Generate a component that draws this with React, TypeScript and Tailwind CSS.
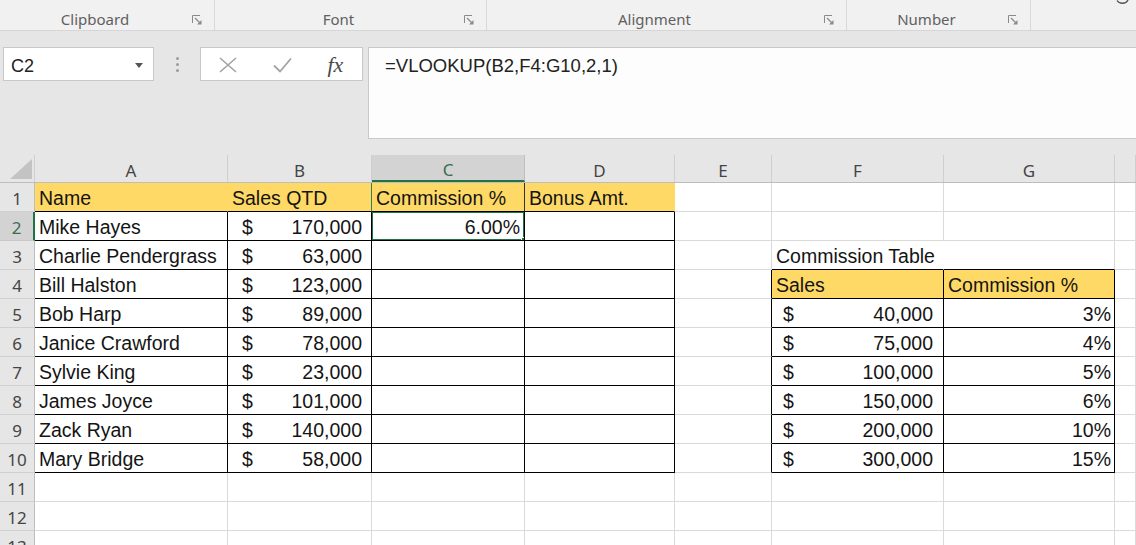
import React from 'react';

const YELLOW = 'bg-[#ffd966]';

type Cell = { text?: string; money?: string; right?: string; fill?: boolean; overflow?: boolean };

const Launcher = () => (
  <svg width="10" height="10" viewBox="0 0 10 10" className="text-[#8a8a8a]">
    <path d="M0.5 8V0.5H8" fill="none" stroke="currentColor" strokeWidth="1" />
    <path d="M3 3L8 8" fill="none" stroke="currentColor" strokeWidth="1.2" />
    <path d="M5 9.5H9.5V5Z" fill="currentColor" />
  </svg>
);

const RibbonGroup = ({ label, width }: { label: string; width: string }) => (
  <div className={`flex h-full items-start border-r border-r-[#d8d8d8] ${width}`}>
    <div className="flex-1 pt-[8px] text-center text-[15px] leading-[22px] text-[#606060]">{label}</div>
    <div className="w-[24px] pt-[15px] pl-[2px]">
      <Launcher />
    </div>
  </div>
);

const leftNames = ['Mike Hayes', 'Charlie Pendergrass', 'Bill Halston', 'Bob Harp', 'Janice Crawford', 'Sylvie King', 'James Joyce', 'Zack Ryan', 'Mary Bridge'];
const leftSales = ['170,000', '63,000', '123,000', '89,000', '78,000', '23,000', '101,000', '140,000', '58,000'];
const tiers = [
  ['40,000', '3%'],
  ['75,000', '4%'],
  ['100,000', '5%'],
  ['150,000', '6%'],
  ['200,000', '10%'],
  ['300,000', '15%'],
];

function cellAt(r: number, c: number): Cell {
  if (r === 1) {
    if (c === 1) return { text: 'Name', fill: true };
    if (c === 2) return { text: 'Sales QTD', fill: true };
    if (c === 3) return { text: 'Commission %', fill: true };
    if (c === 4) return { text: 'Bonus Amt.', fill: true };
  }
  if (r >= 2 && r <= 10) {
    if (c === 1) return { text: leftNames[r - 2] };
    if (c === 2) return { money: leftSales[r - 2] };
    if (c === 3 && r === 2) return { right: '6.00%' };
  }
  if (r === 3 && c === 6) return { text: 'Commission Table', overflow: true };
  if (r === 4 && c === 6) return { text: 'Sales', fill: true };
  if (r === 4 && c === 7) return { text: 'Commission %', fill: true };
  if (r >= 5 && r <= 10) {
    if (c === 6) return { money: tiers[r - 5][0] };
    if (c === 7) return { right: tiers[r - 5][1] };
  }
  return {};
}

function rightBorder(r: number, c: number) {
  if (r === 1 && c >= 1 && c <= 4) {
    if (c === 2) return 'border-r-[#3d7a57]';
    if (c === 3) return 'border-r-[#333]';
    return 'border-r-[#ffd966]';
  }
  if (r >= 2 && r <= 10 && c >= 1 && c <= 4) return 'border-r-black';
  if (r >= 4 && r <= 10 && c >= 5 && c <= 7) return 'border-r-black';
  if (r === 3 && c === 6) return 'border-r-white';
  return 'border-r-[#dadada]';
}

function bottomBorder(r: number, c: number) {
  if (r >= 1 && r <= 10 && c >= 1 && c <= 4) return 'border-b-black';
  if (r >= 3 && r <= 10 && c >= 6 && c <= 7) return 'border-b-black';
  return 'border-b-[#dadada]';
}

const SheetCell = ({ r, c }: { r: number; c: number }) => {
  const cell = cellAt(r, c);
  const selected = r === 2 && c === 3;
  const money = c === 2 ? 'pl-[14px] pr-[9px]' : 'pl-[11px] pr-[10px]';
  return (
    <div
      className={`relative flex items-center border-r border-b pt-[4px] text-[19.5px] leading-none text-[#141414] ${rightBorder(r, c)} ${bottomBorder(r, c)} ${cell.fill ? YELLOW : 'bg-white'} ${cell.overflow ? 'z-10 overflow-visible whitespace-nowrap' : 'overflow-hidden'}`}
    >
      {cell.text && <span className="whitespace-nowrap pl-[4px]">{cell.text}</span>}
      {cell.money && (
        <div className={`flex w-full justify-between ${money}`}>
          <span>$</span>
          <span>{cell.money}</span>
        </div>
      )}
      {cell.right && <span className={`w-full text-right ${c === 3 ? 'pr-[4px]' : 'pr-[3px]'}`}>{cell.right}</span>}
      {selected && (
        <>
          <div className="pointer-events-none absolute -top-[1px] -left-[1px] -right-[1px] -bottom-[1px] border-2 border-[#217346]" />
          <div className="absolute -right-[3px] -bottom-[3px] h-[6px] w-[6px] border border-white bg-[#217346]" />
        </>
      )}
    </div>
  );
};

const cols = ['A', 'B', 'C', 'D', 'E', 'F', 'G', ''];
const rows = Array.from({ length: 13 }, (_, i) => i + 1);

export default function App() {
  return (
    <div className="h-[545px] w-[1136px] overflow-hidden bg-white" style={{ fontFamily: '"Liberation Sans", Arial, sans-serif' }}>
      {/* ribbon group labels */}
      <div className="relative flex h-[31px] border-b border-b-[#d6d6d6] bg-[#f1f1f1]" style={{ fontFamily: '"Noto Sans", "Open Sans", sans-serif' }}>
        <RibbonGroup label="Clipboard" width="w-[215px]" />
        <RibbonGroup label="Font" width="w-[272px]" />
        <RibbonGroup label="Alignment" width="w-[360px]" />
        <RibbonGroup label="Number" width="w-[184px]" />
        <div className="flex-1" />
        <svg width="14" height="6" viewBox="0 0 14 6" className="absolute right-[6px] top-0">
          <path d="M1 0.5C3 4 10 4.5 12 0" fill="none" stroke="#555" strokeWidth="1.4" />
        </svg>
      </div>

      {/* name box + formula bar */}
      <div className="flex h-[124px] items-start bg-[#e6e6e6] pt-[16px]">
        <div className="ml-[3px] flex h-[34px] w-[151px] items-center justify-between border border-[#c8c8c8] bg-white pl-[7px] pr-[10px] pt-[4px]">
          <span className="text-[18px] leading-none text-[#222]">C2</span>
          <svg width="8" height="5" viewBox="0 0 8 5" className="-mt-[2px]">
            <path d="M0 0H8L4 5Z" fill="#555" />
          </svg>
        </div>
        <div className="flex h-[34px] w-[46px] flex-col items-center justify-center gap-[3px] pt-[1px]">
          <span className="h-[3px] w-[3px] rounded-full bg-[#9c9c9c]" />
          <span className="h-[3px] w-[3px] rounded-full bg-[#9c9c9c]" />
          <span className="h-[3px] w-[3px] rounded-full bg-[#9c9c9c]" />
        </div>
        <div className="flex h-[34px] w-[163px] items-center border border-[#c8c8c8] bg-white pt-[1px]">
          <div className="flex w-[55px] justify-center">
            <svg width="18" height="16" viewBox="0 0 18 16">
              <path d="M1 1L17 15M17 1L1 15" stroke="#a3a3a3" strokeWidth="1.6" fill="none" />
            </svg>
          </div>
          <div className="flex w-[54px] justify-center">
            <svg width="19" height="16" viewBox="0 0 19 16">
              <path d="M1 8.5L7 14.5L18 1.5" stroke="#a3a3a3" strokeWidth="1.8" fill="none" />
            </svg>
          </div>
          <div className="flex w-[54px] justify-center">
            <span className="text-[22px] italic leading-none text-[#4a4a4a]" style={{ fontFamily: '"Liberation Serif", serif' }}>
              fx
            </span>
          </div>
        </div>
        <div className="ml-[5px] h-[92px] flex-1 border-t border-l border-b border-[#c8c8c8] bg-[#fdfdfd] pl-[16px] pt-[7px]">
          <span className="text-[18.5px] leading-[22px] text-[#222]">=VLOOKUP(B2,F4:G10,2,1)</span>
        </div>
      </div>

      {/* column headers */}
      <div className="grid h-[28px] grid-cols-[35px_193px_144px_153px_150px_97px_172px_171px_1fr] border-b border-b-[#bdbdbd] bg-[#e6e6e6]">
        <div className="flex items-end justify-end border-r border-r-[#cfcfcf] pb-[3px] pr-[2px]">
          <svg width="22" height="20" viewBox="0 0 22 20">
            <path d="M22 0V20H0Z" fill="#c3c3c3" />
          </svg>
        </div>
        {cols.map((l, i) => (
          <div
            key={i}
            className={`flex items-center justify-center pt-[3px] text-[17px] leading-none ${
              l === 'C'
                ? 'border-r border-b-2 border-r-[#bdbdbd] border-b-[#217346] bg-[#d3d3d3] text-[#3b6e51]'
                : 'border-r border-r-[#cfcfcf] text-[#444]'
            }`}
            style={{ fontFamily: '"Noto Sans", "Open Sans", sans-serif' }}
          >
            {l}
          </div>
        ))}
      </div>

      {/* sheet body */}
      <div className="grid auto-rows-[29px] grid-cols-[35px_193px_144px_153px_150px_97px_172px_171px_1fr]">
        {rows.map((r) => (
          <React.Fragment key={r}>
            <div
              className={`flex items-center justify-center border-b pt-[2px] text-[17px] leading-none ${
                r === 2
                  ? 'border-r-2 border-r-[#217346] border-b-[#c8c8c8] bg-[#d3d3d3] text-[#3b6e51]'
                  : 'border-r border-r-[#bdbdbd] border-b-[#d0d0d0] bg-[#e6e6e6] text-[#444]'
              }`}
              style={{ fontFamily: '"Noto Sans", "Open Sans", sans-serif' }}
            >
              {r}
            </div>
            {[1, 2, 3, 4, 5, 6, 7, 8].map((c) => (
              <SheetCell key={c} r={r} c={c} />
            ))}
          </React.Fragment>
        ))}
      </div>
    </div>
  );
}
